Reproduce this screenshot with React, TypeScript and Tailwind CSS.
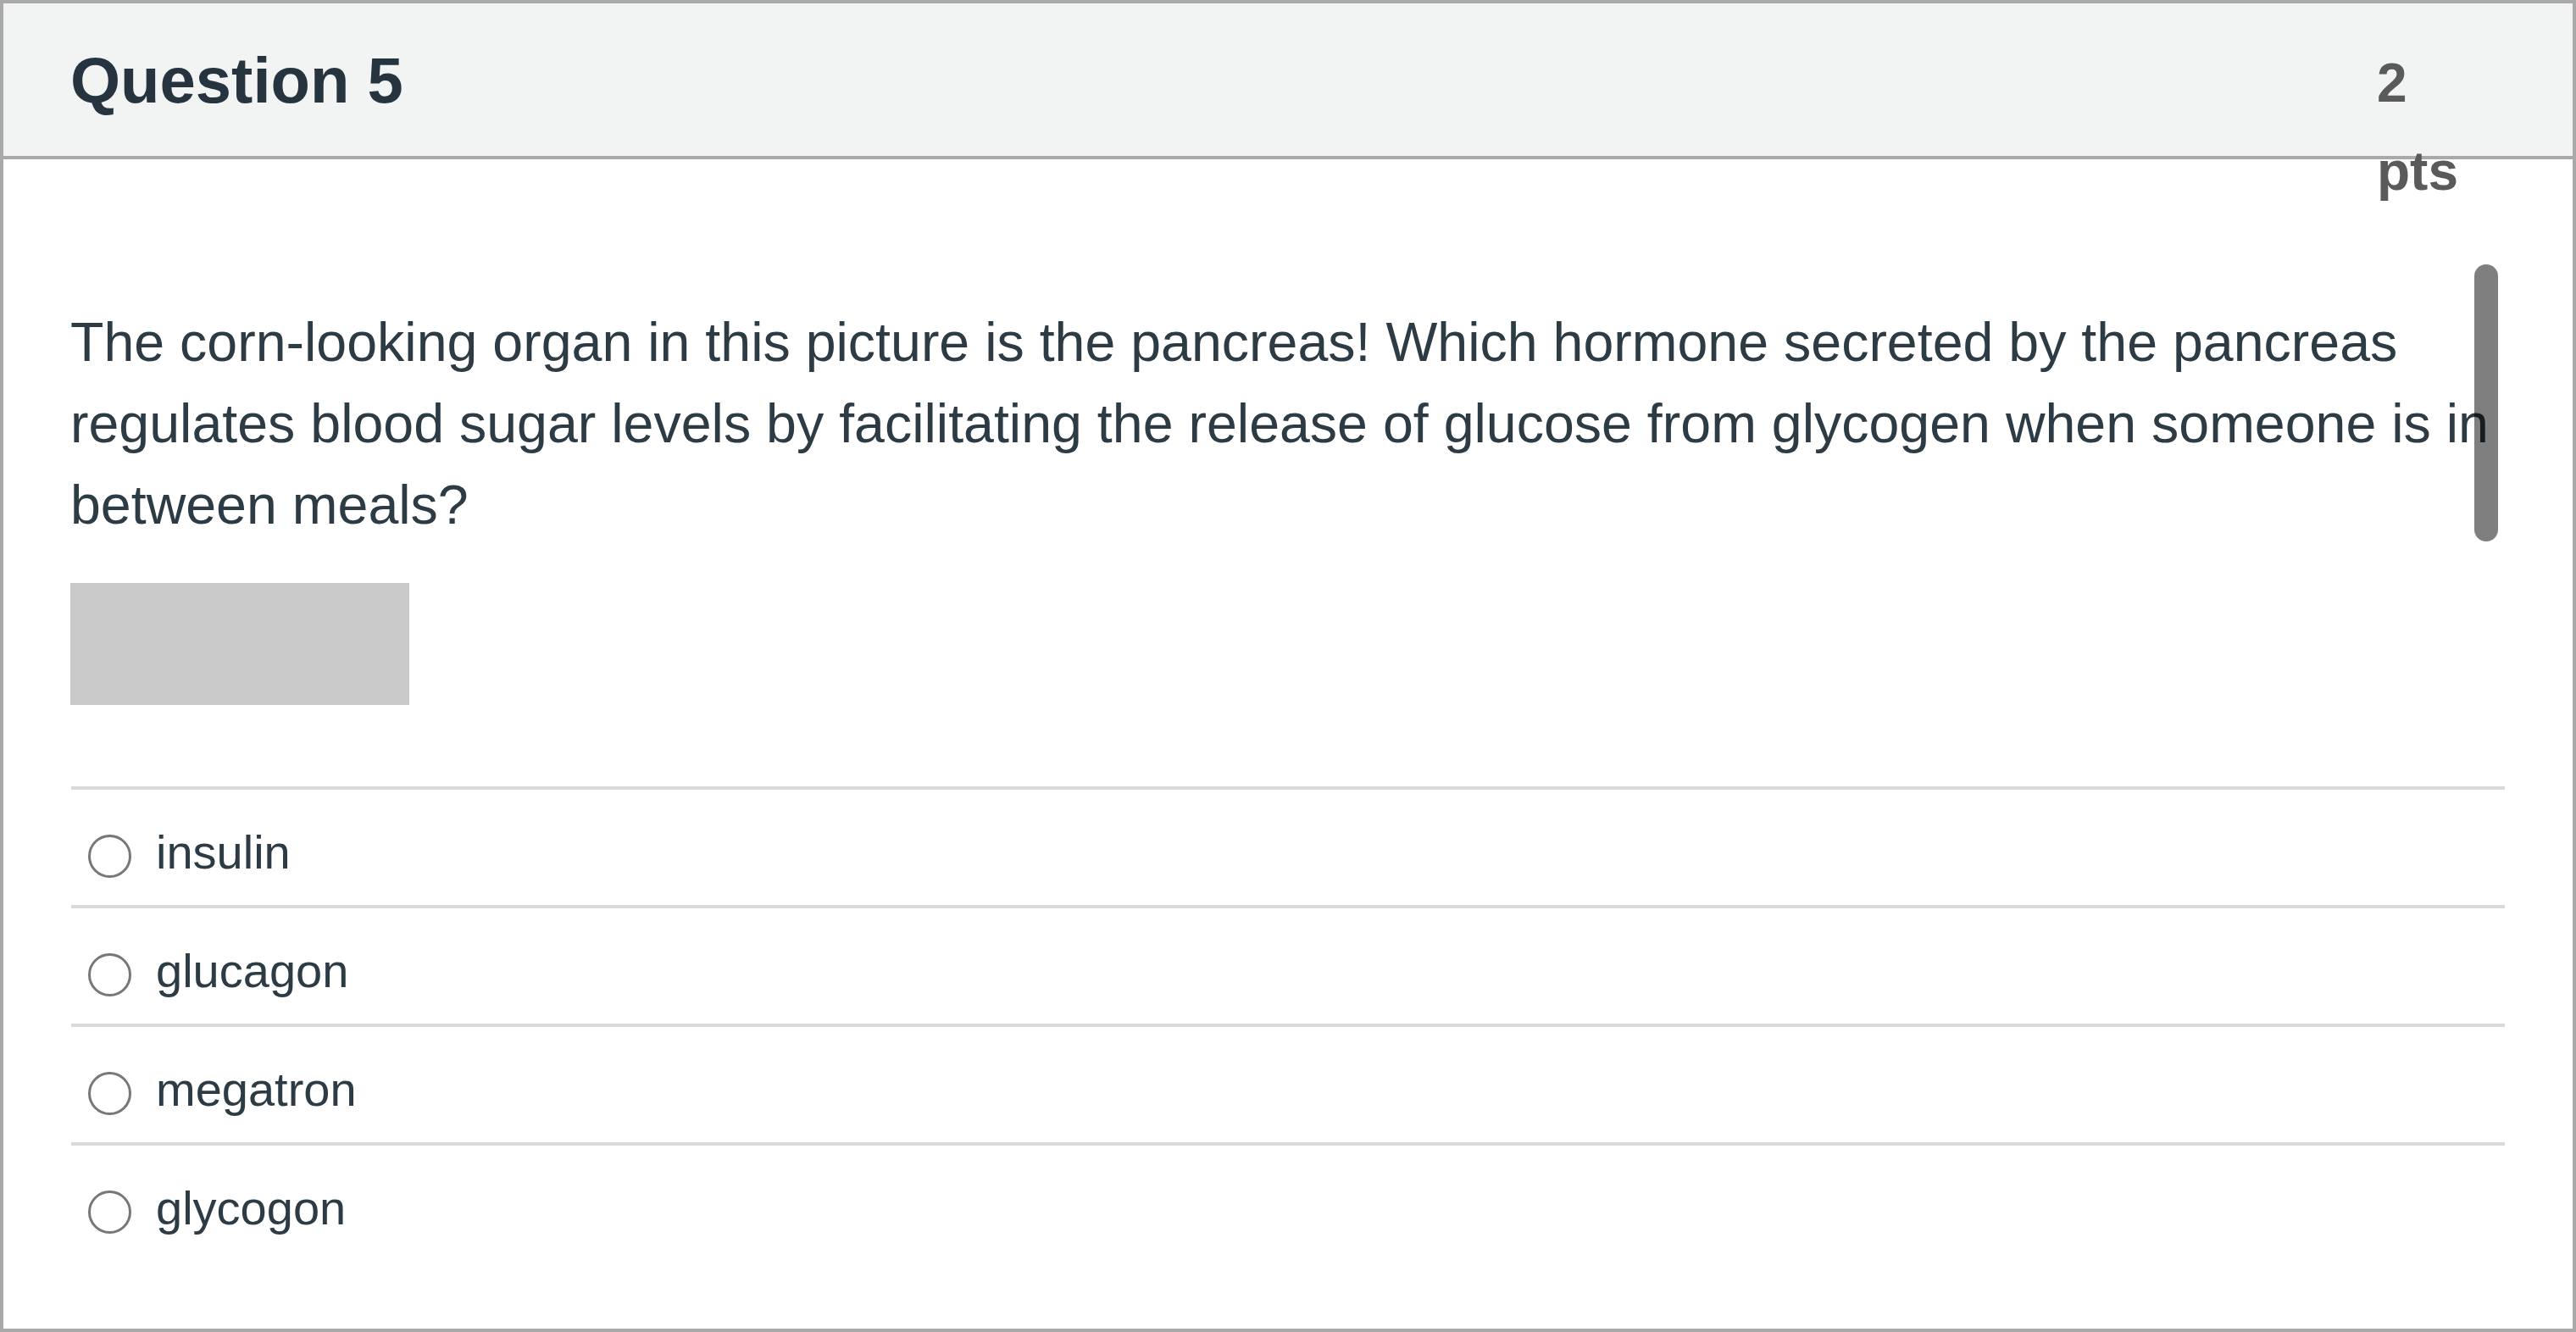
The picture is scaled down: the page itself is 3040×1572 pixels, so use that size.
import React from 'react'

const options = ['insulin', 'glucagon', 'megatron', 'glycogon']

function Radio({ label }: { label: string }) {
  return (
    <label className="flex items-center h-[140px] pt-[12px] pl-[20px] border-t-4 border-[#dadada]">
      <span className="mt-[8px] w-[51px] h-[51px] rounded-full border-[3px] border-[#777777] bg-white shrink-0" />
      <span className="ml-[29px] text-[56px] leading-[64px] text-[#2d3b45]">{label}</span>
    </label>
  )
}

export default function App() {
  return (
    <div className="w-[3040px] h-[1572px] bg-white" style={{ fontFamily: '"Liberation Sans", Arial, sans-serif' }}>
      <div className="relative h-full border-4 border-[#a9a9a9] bg-white overflow-hidden">
        {/* header */}
        <div className="h-[184px] bg-[#f2f3f3] border-b-4 border-[#a9a9a9] flex items-start justify-between pl-[79px] pr-[91px] pt-[43px]">
          <h2 className="text-[76px] leading-[96px] font-bold text-[#263440]">Question 5</h2>
          <div className="w-[140px] text-[64px] leading-[104px] font-bold text-[#5a5a5a] -mt-[1px] relative z-10">2 pts</div>
        </div>

        {/* body */}
        <div className="px-[80px] pt-[168px]">
          <p className="text-[64.5px] leading-[96px] text-[#2d3b45] -ml-[1px]">
            The corn-looking organ in this picture is the pancreas! Which hormone secreted by the pancreas regulates blood sugar levels by facilitating the release of glucose from glycogen when someone is in between meals?
          </p>
          <div className="mt-[44px] w-[400px] h-[144px] bg-[#cacaca] -ml-[1px]" />

          <div className="mt-[96px]">
            {options.map(o => <Radio key={o} label={o} />)}
          </div>
        </div>

        {/* overlay scrollbar */}
        <div className="absolute top-[308px] right-[88px] w-[28px] h-[327px] rounded-full bg-black/50" />
      </div>
    </div>
  )
}
